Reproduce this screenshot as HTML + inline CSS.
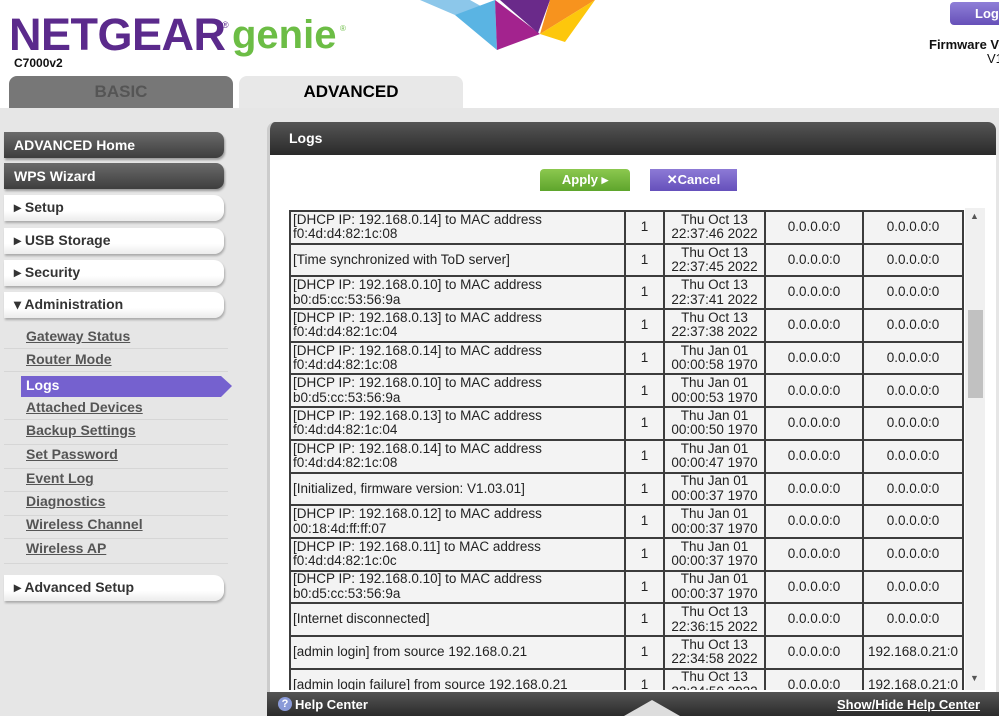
<!DOCTYPE html>
<html><head><meta charset="utf-8"><style>
*{margin:0;padding:0;box-sizing:border-box}
body{width:999px;height:716px;overflow:hidden;background:#e6e6e6;font-family:"Liberation Sans",Arial,sans-serif;position:relative}
.hdr{position:absolute;left:0;top:0;width:999px;height:108px;background:#fff}
.abs{position:absolute}
.tab{position:absolute;top:76px;height:32px;width:224px;border-radius:8px 8px 0 0;text-align:center;font-weight:bold;font-size:17px;line-height:32px}
.dk{position:absolute;left:4px;width:220px;height:26px;border-radius:0 8px 8px 0;background:linear-gradient(#6a6a6a,#3e3e3e);color:#fff;font-weight:bold;font-size:14px;line-height:26px;padding-left:10px;box-shadow:1px 2px 2px #999}
.wt{position:absolute;left:4px;width:220px;height:26px;border-radius:0 10px 10px 0;background:linear-gradient(#fff 60%,#ececec);color:#333;font-weight:bold;font-size:14px;line-height:25px;padding-left:10px;box-shadow:1px 2px 2px #aaa}
.sub{position:absolute;left:26px;font-size:14px;font-weight:bold;color:#555;text-decoration:underline}
.sep{position:absolute;left:4px;width:224px;height:1px;background:#d6d6d6}
table{border-collapse:collapse;position:absolute;left:289px;top:209px;width:673px;table-layout:fixed}
td{border:2px solid #3c3c3c;background:#f3f3f3;height:32.7px;font-size:13.5px;line-height:14.5px;color:#222;text-align:center;padding:0}
td.l{text-align:left;padding-left:2px}
</style></head><body>
<div class="hdr"></div>
<svg class="abs" style="left:420px;top:0" width="190" height="55">
<polygon points="0,0 50,0 75,14 35,15" fill="#8cc7ea"/>
<polygon points="35,15 75,0 77,50" fill="#5ab4e3"/>
<polygon points="75,0 77,50 120,34" fill="#a3238e"/>
<polygon points="80,0 130,0 118,33" fill="#6a2a8a"/>
<polygon points="130,0 175,0 120,34" fill="#f7931e"/>
<polygon points="120,34 175,0 145,42" fill="#fdc70c"/>
</svg>
<div class="abs" style="left:9px;top:9px;font-size:45px;font-weight:bold;color:#5b2a8c;letter-spacing:-0.5px">NETGEAR</div>
<div class="abs" style="left:222px;top:20px;font-size:9px;color:#5b2a8c">®</div>
<div class="abs" style="left:232px;top:13px;font-size:40px;font-weight:bold;color:#6cbd45">genie</div>
<div class="abs" style="left:340px;top:24px;font-size:8px;color:#6cbd45">®</div>
<div class="abs" style="left:14px;top:56px;font-size:12px;font-weight:bold;color:#111">C7000v2</div>
<div class="abs" style="left:950px;top:2px;width:60px;height:23px;border-radius:4px;background:linear-gradient(#8f7fd8,#6650b8);color:#fff;font-weight:bold;font-size:13px;line-height:23px;padding-left:25px">Logout</div>
<div class="abs" style="left:929px;top:37px;font-size:13px;font-weight:bold;color:#111;white-space:nowrap">Firmware Version</div>
<div class="abs" style="left:987px;top:51px;font-size:13px;color:#111">V1</div>
<div class="tab" style="left:9px;background:#777;color:#555">BASIC</div>
<div class="tab" style="left:239px;background:#e8e8e8;color:#000">ADVANCED</div>

<div class="dk" style="top:132px">ADVANCED Home</div>
<div class="dk" style="top:163px">WPS Wizard</div>
<div class="wt" style="top:195px">▸ Setup</div>
<div class="wt" style="top:228px">▸ USB Storage</div>
<div class="wt" style="top:260px">▸ Security</div>
<div class="wt" style="top:292px">▾ Administration</div>
<div class="sub" style="top:328px">Gateway Status</div><div class="sep" style="top:348px"></div>
<div class="sub" style="top:351px">Router Mode</div><div class="sep" style="top:371px"></div>
<svg class="abs" style="left:21px;top:376px" width="212" height="21"><polygon points="0,0 200,0 211,10 200,21 0,21" fill="#7561cf"/></svg>
<div class="abs" style="left:26px;top:375px;font-size:14px;font-weight:bold;color:#fff;line-height:20px">Logs</div>
<div class="sub" style="top:399px">Attached Devices</div><div class="sep" style="top:419px"></div>
<div class="sub" style="top:422px">Backup Settings</div><div class="sep" style="top:444px"></div>
<div class="sub" style="top:446px">Set Password</div><div class="sep" style="top:468px"></div>
<div class="sub" style="top:470px">Event Log</div><div class="sep" style="top:491px"></div>
<div class="sub" style="top:493px">Diagnostics</div><div class="sep" style="top:515px"></div>
<div class="sub" style="top:516px">Wireless Channel</div><div class="sep" style="top:538px"></div>
<div class="sub" style="top:540px">Wireless AP</div><div class="sep" style="top:563px"></div>
<div class="wt" style="top:575px">▸ Advanced Setup</div>

<div class="abs" style="left:267px;top:122px;width:729px;height:594px;background:#fff;border-left:3px solid #ccc;border-radius:8px 8px 0 0;overflow:hidden">
<div style="height:33px;background:linear-gradient(#555,#2a2a2a);color:#fff;font-weight:bold;font-size:14px;line-height:33px;padding-left:19px">Logs</div>
</div>
<div class="abs" style="left:540px;top:169px;width:90px;height:22px;border-radius:4px 4px 0 0;background:linear-gradient(#8cc84f,#5ea52c);color:#fff;font-weight:bold;font-size:13px;line-height:22px;text-align:center">Apply ▸</div>
<div class="abs" style="left:650px;top:169px;width:87px;height:22px;background:linear-gradient(#8d7ad6,#6550bb);color:#fff;font-weight:bold;font-size:13px;line-height:21px;text-align:center">✕Cancel</div>

<div class="abs" style="left:287px;top:207px;width:680px;height:483px;overflow:hidden">
<table style="left:2px;top:3px">
<colgroup><col style="width:335px"><col style="width:39px"><col style="width:101px"><col style="width:98px"><col style="width:100px"></colgroup>
<tr><td class="l">[DHCP IP: 192.168.0.14] to MAC address<br>f0:4d:d4:82:1c:08</td><td>1</td><td>Thu Oct 13<br>22:37:46 2022</td><td>0.0.0.0:0</td><td>0.0.0.0:0</td></tr>
<tr><td class="l">[Time synchronized with ToD server]</td><td>1</td><td>Thu Oct 13<br>22:37:45 2022</td><td>0.0.0.0:0</td><td>0.0.0.0:0</td></tr>
<tr><td class="l">[DHCP IP: 192.168.0.10] to MAC address<br>b0:d5:cc:53:56:9a</td><td>1</td><td>Thu Oct 13<br>22:37:41 2022</td><td>0.0.0.0:0</td><td>0.0.0.0:0</td></tr>
<tr><td class="l">[DHCP IP: 192.168.0.13] to MAC address<br>f0:4d:d4:82:1c:04</td><td>1</td><td>Thu Oct 13<br>22:37:38 2022</td><td>0.0.0.0:0</td><td>0.0.0.0:0</td></tr>
<tr><td class="l">[DHCP IP: 192.168.0.14] to MAC address<br>f0:4d:d4:82:1c:08</td><td>1</td><td>Thu Jan 01<br>00:00:58 1970</td><td>0.0.0.0:0</td><td>0.0.0.0:0</td></tr>
<tr><td class="l">[DHCP IP: 192.168.0.10] to MAC address<br>b0:d5:cc:53:56:9a</td><td>1</td><td>Thu Jan 01<br>00:00:53 1970</td><td>0.0.0.0:0</td><td>0.0.0.0:0</td></tr>
<tr><td class="l">[DHCP IP: 192.168.0.13] to MAC address<br>f0:4d:d4:82:1c:04</td><td>1</td><td>Thu Jan 01<br>00:00:50 1970</td><td>0.0.0.0:0</td><td>0.0.0.0:0</td></tr>
<tr><td class="l">[DHCP IP: 192.168.0.14] to MAC address<br>f0:4d:d4:82:1c:08</td><td>1</td><td>Thu Jan 01<br>00:00:47 1970</td><td>0.0.0.0:0</td><td>0.0.0.0:0</td></tr>
<tr><td class="l">[Initialized, firmware version: V1.03.01]</td><td>1</td><td>Thu Jan 01<br>00:00:37 1970</td><td>0.0.0.0:0</td><td>0.0.0.0:0</td></tr>
<tr><td class="l">[DHCP IP: 192.168.0.12] to MAC address<br>00:18:4d:ff:ff:07</td><td>1</td><td>Thu Jan 01<br>00:00:37 1970</td><td>0.0.0.0:0</td><td>0.0.0.0:0</td></tr>
<tr><td class="l">[DHCP IP: 192.168.0.11] to MAC address<br>f0:4d:d4:82:1c:0c</td><td>1</td><td>Thu Jan 01<br>00:00:37 1970</td><td>0.0.0.0:0</td><td>0.0.0.0:0</td></tr>
<tr><td class="l">[DHCP IP: 192.168.0.10] to MAC address<br>b0:d5:cc:53:56:9a</td><td>1</td><td>Thu Jan 01<br>00:00:37 1970</td><td>0.0.0.0:0</td><td>0.0.0.0:0</td></tr>
<tr><td class="l">[Internet disconnected]</td><td>1</td><td>Thu Oct 13<br>22:36:15 2022</td><td>0.0.0.0:0</td><td>0.0.0.0:0</td></tr>
<tr><td class="l">[admin login] from source 192.168.0.21</td><td>1</td><td>Thu Oct 13<br>22:34:58 2022</td><td>0.0.0.0:0</td><td>192.168.0.21:0</td></tr>
<tr><td class="l">[admin login failure] from source 192.168.0.21</td><td>1</td><td>Thu Oct 13<br>22:34:50 2022</td><td>0.0.0.0:0</td><td>192.168.0.21:0</td></tr>
</table>
</div>
<div class="abs" style="left:965px;top:208px;width:20px;height:482px;background:#f0f0f0"></div>
<div class="abs" style="left:968px;top:310px;width:15px;height:88px;background:#c1c1c1"></div>
<div class="abs" style="left:970px;top:211px;font-size:9px;color:#555">▲</div>
<div class="abs" style="left:970px;top:673px;font-size:9px;color:#555">▼</div>

<div class="abs" style="left:267px;top:692px;width:732px;height:24px;background:linear-gradient(#555,#2b2b2b)"></div>
<div class="abs" style="left:278px;top:697px;width:14px;height:14px;border-radius:50%;background:#8a9ad8;color:#fff;font-size:11px;font-weight:bold;text-align:center;line-height:14px">?</div>
<div class="abs" style="left:295px;top:697px;font-size:13px;font-weight:bold;color:#fff">Help Center</div>
<svg class="abs" style="left:624px;top:700px" width="56" height="16"><polygon points="28,0 56,16 0,16" fill="#ddd"/></svg>
<div class="abs" style="left:837px;top:697px;font-size:13px;font-weight:bold;color:#fff;text-decoration:underline">Show/Hide Help Center</div>
</body></html>
